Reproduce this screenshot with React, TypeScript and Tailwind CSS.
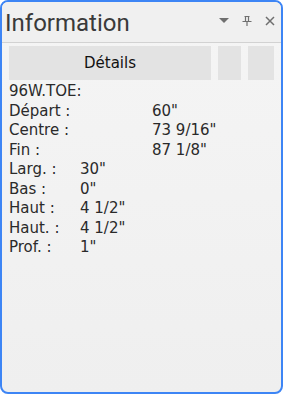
import React from 'react';

const rows: { label: string; value: string; wide?: boolean }[] = [
  { label: 'Départ :', value: '60"', wide: true },
  { label: 'Centre :', value: '73 9/16"', wide: true },
  { label: 'Fin :', value: '87 1/8"', wide: true },
  { label: 'Larg. :', value: '30"' },
  { label: 'Bas :', value: '0"' },
  { label: 'Haut :', value: '4 1/2"' },
  { label: 'Haut. :', value: '4 1/2"' },
  { label: 'Prof. :', value: '1"' },
];

export default function App() {
  return (
    <div className="w-[283px] h-[394px] bg-white">
      <div className="w-full h-full rounded-[8px] border-2 border-[#3d85f5] bg-gradient-to-b from-[#f5f5f5] to-[#efefef] flex flex-col overflow-hidden">
        {/* Header */}
        <div className="h-[41px] flex items-center justify-between pl-[3px] pr-[6px] bg-[#f0f0f0] border-b border-[#d2d2d2]">
          <span
            className="text-[24px] leading-none text-[#3a3a3a] mt-[1px]"
            style={{ fontFamily: 'Roboto, "Open Sans", sans-serif' }}
          >
            Information
          </span>
          <div className="flex items-center gap-[13px] -mt-[2px]">
            <svg width="10" height="6" viewBox="0 0 10 6">
              <path d="M0 0 L10 0 L5 5 Z" fill="#6f6f6f" />
            </svg>
            <svg width="10" height="10" viewBox="0 0 10 10">
              <path d="M2.5 0.5 H7.5 M3.5 0.5 V5.5 M6.5 0.5 V5.5 M0.5 5.5 H9.5 M5 5.5 V10" stroke="#6f6f6f" strokeWidth="1.2" fill="none" />
            </svg>
            <svg width="10" height="10" viewBox="0 0 10 10">
              <path d="M1 1 L9 9 M9 1 L1 9" stroke="#6f6f6f" strokeWidth="1.5" />
            </svg>
          </div>
        </div>

        {/* Tabs */}
        <div className="flex gap-[7px] px-[7px] pt-[3px]">
          <div
            className="w-[202px] h-[34px] bg-[#e3e3e3] flex items-center justify-center text-[15px] text-[#111]"
            style={{ fontFamily: '"DejaVu Sans", Verdana, sans-serif' }}
          >
            Détails
          </div>
          <div className="w-[23px] h-[34px] bg-[#e3e3e3]" />
          <div className="w-[26px] h-[34px] bg-[#e3e3e3]" />
        </div>

        {/* Details */}
        <div
          className="px-[7px] pt-[2px] text-[15px] leading-[19.5px] text-[#2a2a2a]"
          style={{ fontFamily: '"DejaVu Sans", Verdana, sans-serif' }}
        >
          <div>96W.TOE:</div>
          {rows.map((r, i) => (
            <div key={i} className="flex">
              <span className={r.wide ? 'w-[143px]' : 'w-[71px]'}>{r.label}</span>
              <span>{r.value}</span>
            </div>
          ))}
        </div>
      </div>
    </div>
  );
}
